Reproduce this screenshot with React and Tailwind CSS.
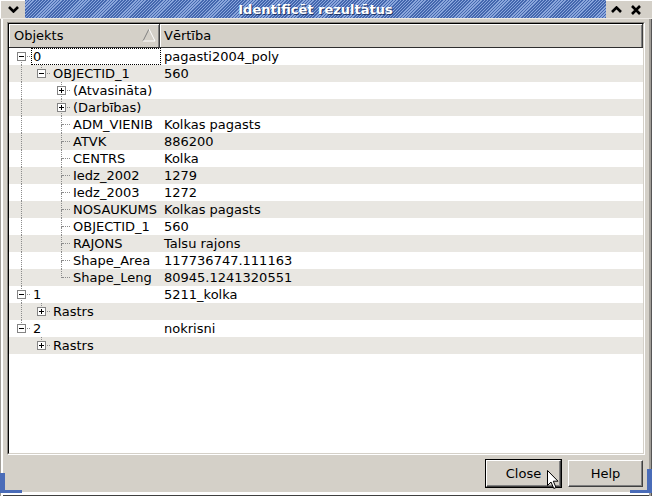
import React from "react";

const ROWS = [
    { d: 0, k: "0", v: "pagasti2004_poly", g: [], top: false, bot: true, box: "minus", focus: true },
    { d: 1, k: "OBJECTID_1", v: "560", g: [true], top: true, bot: false, box: "minus" },
    { d: 2, k: "(Atvasināta)", v: "", g: [true, false], top: true, bot: true, box: "plus" },
    { d: 2, k: "(Darbības)", v: "", g: [true, false], top: true, bot: true, box: "plus" },
    { d: 2, k: "ADM_VIENIB", v: "Kolkas pagasts", g: [true, false], top: true, bot: true },
    { d: 2, k: "ATVK", v: "886200", g: [true, false], top: true, bot: true },
    { d: 2, k: "CENTRS", v: "Kolka", g: [true, false], top: true, bot: true },
    { d: 2, k: "Iedz_2002", v: "1279", g: [true, false], top: true, bot: true },
    { d: 2, k: "Iedz_2003", v: "1272", g: [true, false], top: true, bot: true },
    { d: 2, k: "NOSAUKUMS", v: "Kolkas pagasts", g: [true, false], top: true, bot: true },
    { d: 2, k: "OBJECTID_1", v: "560", g: [true, false], top: true, bot: true },
    { d: 2, k: "RAJONS", v: "Talsu rajons", g: [true, false], top: true, bot: true },
    { d: 2, k: "Shape_Area", v: "117736747.111163", g: [true, false], top: true, bot: true },
    { d: 2, k: "Shape_Leng", v: "80945.1241320551", g: [true, false], top: true, bot: false },
    { d: 0, k: "1", v: "5211_kolka", g: [], top: true, bot: true, box: "minus" },
    { d: 1, k: "Rastrs", v: "", g: [true], top: true, bot: false, box: "plus" },
    { d: 0, k: "2", v: "nokrisni", g: [], top: true, bot: false, box: "minus" },
    { d: 1, k: "Rastrs", v: "", g: [false], top: true, bot: false, box: "plus" },
];

function Expander({ kind }) {
    return (
        <div className="absolute left-[6px] top-[4px] w-[9px] h-[9px] border border-[#848484] bg-white">
            <div className="absolute left-[1px] top-[3px] w-[5px] h-px bg-black" />
            {kind === "plus" && <div className="absolute left-[3px] top-[1px] w-px h-[5px] bg-black" />}
        </div>
    );
}

function Slot({ line, own, top, bot, box }) {
    return (
        <div className="relative w-[20px] h-full shrink-0">
            {line && <div className="absolute left-[10px] top-0 h-full border-l border-dotted border-[#8c8c8c]" />}
            {own && top && <div className="absolute left-[10px] top-0 h-[9px] border-l border-dotted border-[#8c8c8c]" />}
            {own && bot && <div className="absolute left-[10px] top-[9px] bottom-0 border-l border-dotted border-[#8c8c8c]" />}
            {own && <div className="absolute left-[11px] right-[1px] top-[8px] border-t border-dotted border-[#8c8c8c]" />}
            {own && box && <Expander kind={box} />}
        </div>
    );
}

function Button({ label, isDefault }) {
    const inner = (
        <div className="w-[75px] h-[27px] flex items-center justify-center bg-[#d4d0c8] border border-t-white border-l-white border-b-[#404040] border-r-[#404040] shadow-[inset_-1px_-1px_0_#808080] text-[13px] text-black">
            {label}
        </div>
    );
    if (!isDefault) return inner;
    return <div className="border-[1.5px] border-black">{inner}</div>;
}

export default function App() {
    return (
        <div className="relative w-[652px] h-[496px] bg-[#d4d0c8] flex flex-col overflow-hidden font-['DejaVu_Sans',sans-serif] text-[13px] text-black shadow-[inset_1px_0_0_#a09d97,inset_3px_0_0_#fff,inset_-1px_0_0_#555,inset_-3px_0_0_#a09d97,inset_0_-1px_0_#404040,inset_0_-4px_0_#fff]">
            {/* Title bar */}
            <div className="flex h-[19px] shrink-0 border-b border-[#ece9e4]">
                <div className="w-[25px] flex items-center justify-center bg-[#d4d0c8] border-t border-l border-white">
                    <svg width="11" height="7" viewBox="0 0 11 7">
                        <polyline points="1,1 5.5,5.5 10,1" fill="none" stroke="#000" strokeWidth="2.6" />
                    </svg>
                </div>
                <div className="flex-1 flex items-center justify-center bg-[repeating-linear-gradient(135deg,#4467ae_0px,#4467ae_1.2px,#8aa6dc_1.2px,#8aa6dc_2.2px)]">
                    <span className="font-bold text-white text-[13px] leading-none [text-shadow:1px_1px_0_#23386a]">Identificēt rezultātus</span>
                </div>
                <div className="w-[20px] flex items-center justify-center bg-[#d4d0c8] border-t border-white">
                    <svg width="11" height="7" viewBox="0 0 11 7">
                        <polyline points="1,6 5.5,1.5 10,6" fill="none" stroke="#000" strokeWidth="2.6" />
                    </svg>
                </div>
                <div className="w-[20px] flex items-center justify-center bg-[#d4d0c8] border-t border-white">
                    <svg width="10" height="10" viewBox="0 0 10 10">
                        <path d="M1,1 L9,9 M9,1 L1,9" stroke="#000" strokeWidth="2.6" />
                    </svg>
                </div>
                <div className="w-[6px] bg-[#d4d0c8] border-t border-white" />
            </div>

            {/* Tree frame */}
            <div className="mt-[3px] mx-[7px] h-[433px] shrink-0 border border-t-[#8a8782] border-l-[#8a8782] border-b-white border-r-white">
                <div className="h-full flex flex-col border border-t-black border-l-black border-b-[#d4d0c8] border-r-[#d4d0c8] bg-white">
                    {/* Header */}
                    <div className="flex h-[24px] shrink-0 bg-[#d4d0c8] border-b border-[#2e2e2e]">
                        <div className="relative w-[151px] flex items-center pl-[5px] border-r border-[#404040] shadow-[inset_1px_1px_0_#fff,inset_-1px_0_0_#808080]">
                            Objekts
                            <svg className="absolute left-[133px] top-[4px]" width="14" height="14" viewBox="0 0 14 14">
                                <path d="M7,1 L1,13" stroke="#808080" strokeWidth="1" fill="none" />
                                <path d="M7,1 L13,13 L1,13" stroke="#fff" strokeWidth="1" fill="none" />
                            </svg>
                        </div>
                        <div className="flex-1 flex items-center pl-[4px] border-r border-[#404040] shadow-[inset_1px_1px_0_#fff,inset_-1px_0_0_#808080]">
                            Vērtība
                        </div>
                    </div>

                    {/* Rows */}
                    <div className="flex-1 bg-white">
                        {ROWS.map((r, i) => (
                            <div key={i} className={`relative flex h-[17px] leading-[17px] ${i % 2 ? "bg-[#e9e7e2]" : "bg-white"}`}>
                                <div className="flex w-[151px] shrink-0 pl-[2px]">
                                    {r.g.map((line, l) => (
                                        <Slot key={l} line={line} />
                                    ))}
                                    <Slot own top={r.top} bot={r.bot} box={r.box} />
                                    <span className="ml-[2px] whitespace-nowrap">{r.k}</span>
                                </div>
                                <div className="flex-1 pl-[4px] whitespace-nowrap">{r.v}</div>
                                {r.focus && (
                                    <div className="absolute left-[22px] top-0 w-[130px] h-[17px] border border-dotted border-black" />
                                )}
                            </div>
                        ))}
                    </div>
                </div>
            </div>

            {/* Buttons */}
            <div className="flex items-center justify-end gap-[6px] mt-[3px] mr-[9px] h-[31px] shrink-0">
                <Button label="Close" isDefault />
                <Button label="Help" />
            </div>

            {/* Resize corner highlights */}
            <div className="absolute left-0 bottom-[3px] w-[5px] h-[20px] bg-[#4a6cb8]" />
            <div className="absolute left-0 bottom-[3px] w-[22px] h-[3px] bg-[#4a6cb8]" />
            <div className="absolute right-0 bottom-[3px] w-[5px] h-[24px] bg-[#4a6cb8]" />
            <div className="absolute right-0 bottom-[3px] w-[22px] h-[3px] bg-[#4a6cb8]" />

            {/* Mouse pointer */}
            <svg className="absolute left-[547px] top-[470px]" width="13" height="20" viewBox="0 0 13 20">
                <path d="M0.5,0.5 L0.5,15.5 L4,12 L6.8,18.5 L9,17.5 L6.3,11.2 L11,11.2 Z" fill="#fff" stroke="#000" strokeWidth="1" />
            </svg>
        </div>
    );
}
